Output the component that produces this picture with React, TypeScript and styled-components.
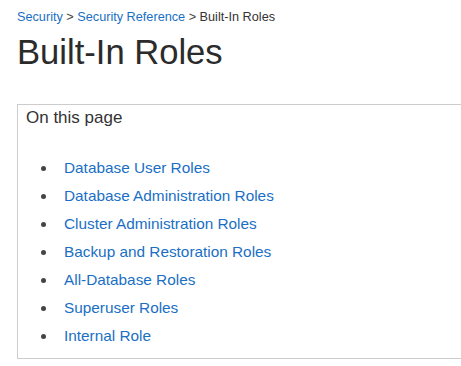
import styled, { createGlobalStyle } from 'styled-components';

const GlobalStyle = createGlobalStyle`
    html, body {
        margin: 0;
        padding: 0;
        background: #fff;
        overflow: hidden;
    }
    body {
        font-family: "Liberation Sans", Arial, sans-serif;
    }
`;

const Page = styled.div`
    padding: 10px 0 0 17px;
    width: 520px;
`;
const Breadcrumb = styled.nav`
    font-size: 12.7px;
    line-height: 15px;
    color: #333;
    white-space: nowrap;
`;
const Crumb = styled.a`
    color: #1a6fc4;
    text-decoration: none;
`;
const Sep = styled.span`
    color: #444;
    margin: 0 3.5px;
`;
const Title = styled.h1`
    margin: 7px 0 0;
    font-size: 34.6px;
    line-height: 40px;
    font-weight: 400;
    color: #2b2b2b;
`;
const Contents = styled.div`
    margin-top: 32px;
    border: 1px solid #cccccc;
    padding: 3px 0 8px 0;
`;
const ContentsTitle = styled.div`
    padding-left: 8px;
    font-size: 17px;
    line-height: 20px;
    color: #333;
`;
const List = styled.ul`
    list-style: none;
    margin: 26px 0 0;
    padding: 0;
`;
const Item = styled.li`
    position: relative;
    padding-left: 46px;
    font-size: 15.35px;
    line-height: 28px;
    &::before {
        content: "";
        position: absolute;
        left: 23px;
        top: 12px;
        width: 5px;
        height: 5px;
        border-radius: 50%;
        background: #444;
    }
`;
const Link = styled.a`
    color: #1a6fc4;
    text-decoration: none;
`;

const sections = [
    "Database User Roles",
    "Database Administration Roles",
    "Cluster Administration Roles",
    "Backup and Restoration Roles",
    "All-Database Roles",
    "Superuser Roles",
    "Internal Role",
];

const App = () => {
    return (
        <Page>
            <GlobalStyle />
            <Breadcrumb>
                <Crumb href="#">Security</Crumb>
                <Sep>&gt;</Sep>
                <Crumb href="#">Security Reference</Crumb>
                <Sep>&gt;</Sep>
                <span>Built-In Roles</span>
            </Breadcrumb>
            <Title>Built-In Roles</Title>
            <Contents>
                <ContentsTitle>On this page</ContentsTitle>
                <List>
                    {sections.map(title => (
                        <Item key={title}>
                            <Link href="#">{title}</Link>
                        </Item>
                    ))}
                </List>
            </Contents>
        </Page>
    );
};
export default App;
